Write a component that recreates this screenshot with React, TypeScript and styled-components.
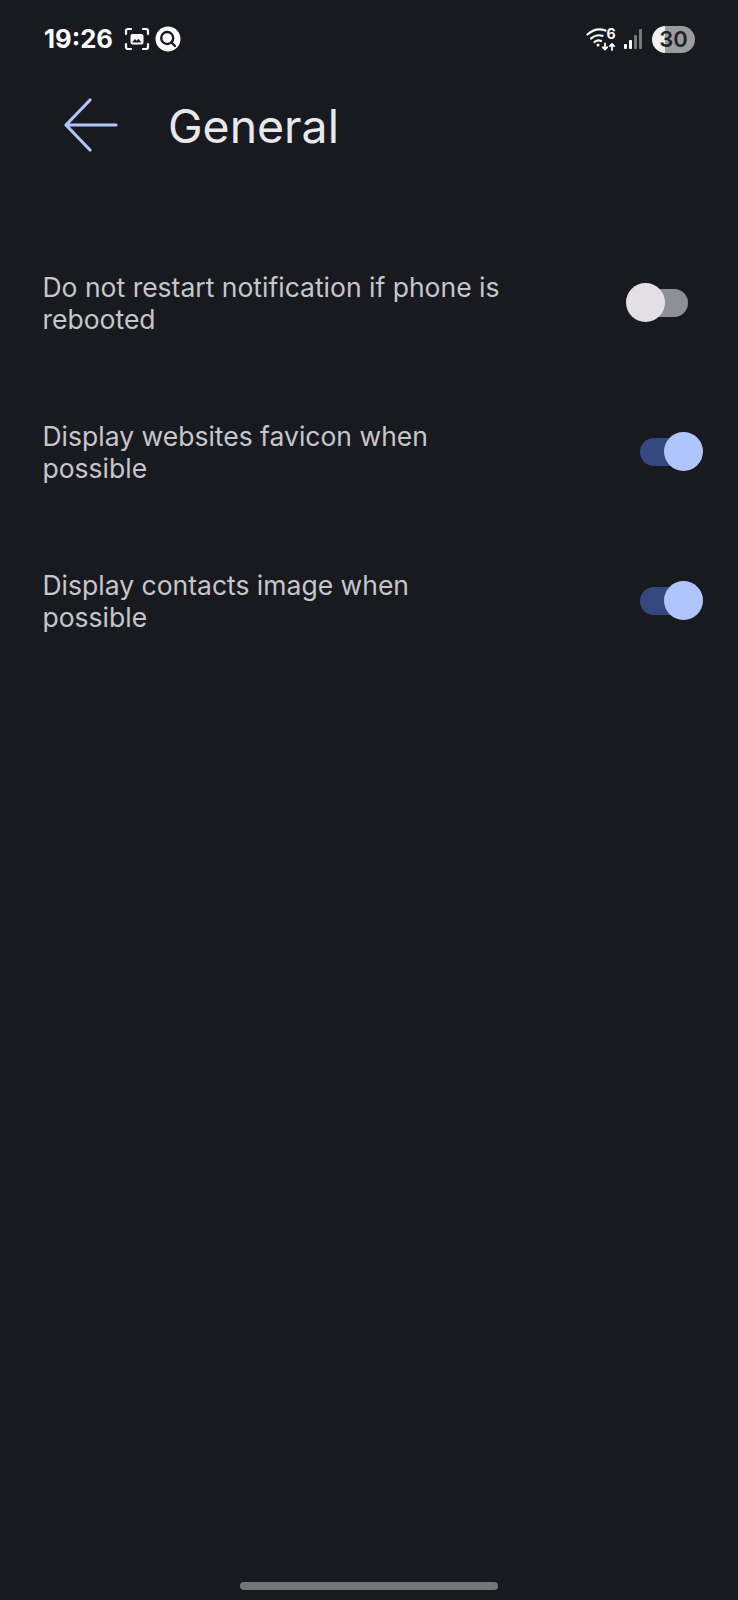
import React from "react";
import styled, { createGlobalStyle } from "styled-components";

const GlobalStyle = createGlobalStyle`
  html, body {
    margin: 0;
    padding: 0;
    background: #191a1f;
  }
`;

const settings = [
  { label: "Do not restart notification if phone is rebooted", on: false },
  { label: "Display websites favicon when possible", on: true },
  { label: "Display contacts image when possible", on: true },
];

const App = () => {
  return (
    <>
      <GlobalStyle />
      <Page>
        <StatusBar>
          <Time>19:26</Time>
          <StatusIcon width="26" height="24" viewBox="0 0 26 24" fill="none">
            <path d="M2 7V4a2 2 0 0 1 2-2h3M19 2h3a2 2 0 0 1 2 2v3M24 17v3a2 2 0 0 1-2 2h-3M7 22H4a2 2 0 0 1-2-2v-3" stroke="#fff" strokeWidth="2.2" strokeLinecap="round" />
            <rect x="6.5" y="7" width="13" height="10.5" rx="2" fill="#fff" />
            <path d="M8 15.5l3-3.4 1.8 1.600 1.600-2 3 3.800z" fill="#191a1f" />
          </StatusIcon>
          <StatusIcon width="26" height="26" viewBox="0 0 26 26" fill="none">
            <circle cx="13" cy="13" r="12.5" fill="#fff" />
            <circle cx="12.2" cy="12" r="6" stroke="#191a1f" strokeWidth="2.4" />
            <path d="M16.500 16.500l3.500 3.500" stroke="#191a1f" strokeWidth="2.4" strokeLinecap="round" />
          </StatusIcon>
          <Spacer />
          <WifiIcon width="32" height="26" viewBox="0 0 32 26" fill="none">
            <path d="M1.500 8.500C7 3.500 14 2.500 19.500 4.500" stroke="#fff" strokeWidth="2.2" strokeLinecap="round" />
            <path d="M5 12.500c3.600-3.200 8-3.800 11.500-2.600" stroke="#fff" strokeWidth="2.2" strokeLinecap="round" />
            <path d="M8.500 16c2-1.700 4.500-2 6.500-1" stroke="#fff" strokeWidth="2.2" strokeLinecap="round" />
            <circle cx="12" cy="19" r="1.500" fill="#fff" />
            <path d="M19 17.500v6M16.800 21.200l2.200 2.400 2.200-2.400M26 24v-6M23.800 20.200l2.200-2.400 2.200 2.400" stroke="#fff" strokeWidth="1.8" strokeLinecap="round" strokeLinejoin="round" />
            <text x="20.500" y="13" fill="#fff" fontFamily="Inter, sans-serif" fontWeight="700" fontSize="14">6</text>
          </WifiIcon>
          <SignalIcon width="20" height="22" viewBox="0 0 20 22">
            <rect x="1" y="16" width="3" height="5" rx="1" fill="#fff" />
            <rect x="6" y="12" width="3" height="9" rx="1" fill="#fff" />
            <rect x="11" y="7" width="3" height="14" rx="1" fill="#77787c" />
            <rect x="16" y="1" width="3" height="20" rx="1" fill="#77787c" />
          </SignalIcon>
          <Battery>30</Battery>
        </StatusBar>
        <Header>
          <BackIcon width="56" height="56" viewBox="0 0 56 56" fill="none">
            <path d="M27 2L3 27 27 52M3.500 27H53" stroke="#afc5fb" strokeWidth="3.2" strokeLinecap="round" strokeLinejoin="round" />
          </BackIcon>
          <Title>General</Title>
        </Header>
        <List>
          {settings.map((item) => (
            <Row key={item.label}>
              <Label>{item.label}</Label>
              <Switch>
                <Track $on={item.on} />
                <Thumb $on={item.on} />
              </Switch>
            </Row>
          ))}
        </List>
        <HomeBar />
      </Page>
    </>
  );
};

const Page = styled.div`
  position: relative;
  width: 738px;
  height: 1600px;
  overflow: hidden;
  background: #191a1f;
  font-family: Inter, "Liberation Sans", sans-serif;
`;

const StatusBar = styled.div`
  display: flex;
  align-items: center;
  height: 28px;
  padding: 25px 43px 0 44px;
`;

const Time = styled.span`
  width: 68px;
  margin-right: 12px;
  color: #fff;
  font-size: 25.6px;
  font-weight: 700;
  line-height: 28px;
  white-space: nowrap;
`;

const StatusIcon = styled.svg`
  margin-right: 5px;
`;

const Spacer = styled.div`
  flex-grow: 1;
`;

const WifiIcon = styled.svg`
  margin-right: 5px;
`;

const SignalIcon = styled.svg`
  margin-right: 9px;
`;

const Battery = styled.div`
  width: 43px;
  height: 27px;
  border-radius: 14px;
  background: linear-gradient(90deg, #f0f0f0 0 30%, #9c9c9e 30% 100%);
  color: #222327;
  font-size: 22px;
  font-weight: 600;
  line-height: 27px;
  text-align: center;
`;

const Header = styled.div`
  display: flex;
  align-items: center;
  height: 60px;
  margin-top: 43px;
  padding-left: 63px;
`;

const BackIcon = styled.svg`
  flex-shrink: 0;
  margin-right: 49px;
`;

const Title = styled.h1`
  margin: 0;
  color: #e8e8ec;
  font-size: 46.4px;
  font-weight: 400;
  line-height: 60px;
`;

const List = styled.div`
  display: flex;
  flex-direction: column;
  gap: 85px;
  margin-top: 115px;
  padding: 0 35px 0 42.5px;
`;

const Row = styled.div`
  display: flex;
  align-items: center;
  justify-content: space-between;
  height: 64px;
`;

const Label = styled.div`
  width: 475px;
  color: #c6c7cd;
  font-size: 26.5px;
  line-height: 32px;
`;

const Switch = styled.div`
  position: relative;
  flex-shrink: 0;
  width: 77px;
  height: 40px;
`;

const Track = styled.div<{ $on: boolean }>`
  position: absolute;
  top: 6px;
  left: 14px;
  width: 48px;
  height: 28px;
  border-radius: 14px;
  background: ${(p) => (p.$on ? "#34487f" : "#8f9096")};
`;

const Thumb = styled.div<{ $on: boolean }>`
  position: absolute;
  top: 0;
  left: ${(p) => (p.$on ? "38px" : "0")};
  width: 39px;
  height: 39px;
  border-radius: 50%;
  background: ${(p) => (p.$on ? "#afc5fb" : "#e3dfe5")};
`;

const HomeBar = styled.div`
  position: absolute;
  left: 240px;
  bottom: 10px;
  width: 258px;
  height: 8px;
  border-radius: 4px;
  background: #757578;
`;

export default App;
